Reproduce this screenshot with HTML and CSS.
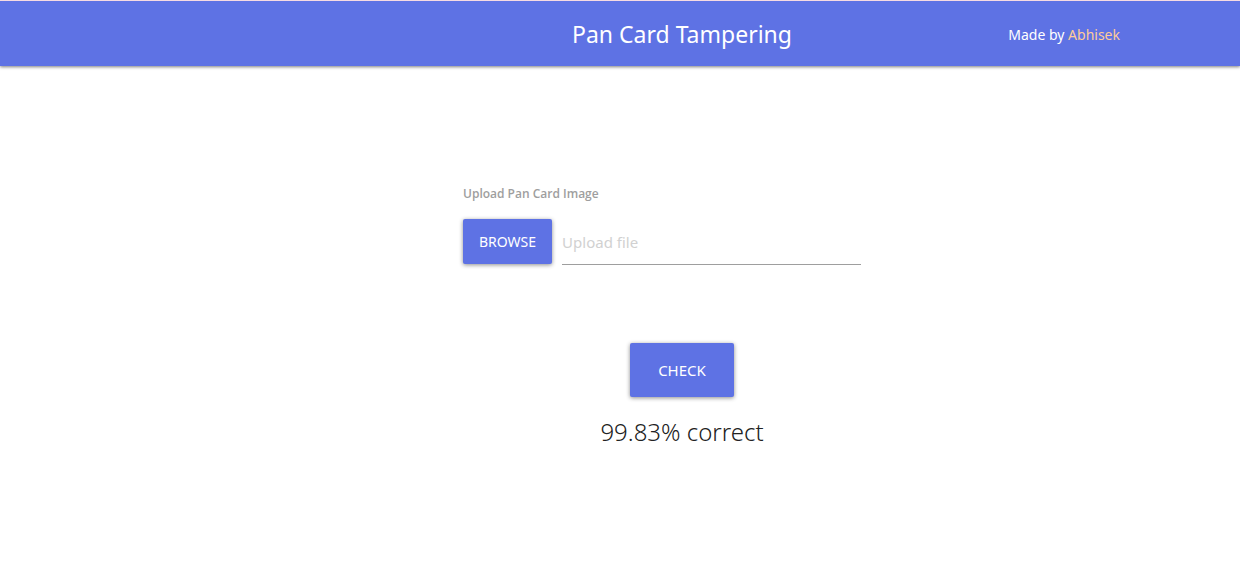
FILE: index.html
```html
<!DOCTYPE html>
<html lang="en">
<head>
<meta charset="utf-8">
<meta name="viewport" content="width=device-width, initial-scale=1">
<title>Pan Card Tampering</title>
<link rel="stylesheet" href="styles.css">
</head>
<body>
<header class="navbar">
  <h1 class="brand">Pan Card Tampering</h1>
  <p class="credit">Made by <a href="#">Abhisek</a></p>
</header>
<main class="content">
  <form class="upload">
    <label class="upload-label" for="file-path">Upload Pan Card Image</label>
    <div class="file-field">
      <button class="btn" type="button">BROWSE</button>
      <input class="file-path" id="file-path" type="text" placeholder="Upload file">
    </div>
    <button class="btn btn-large" type="submit">CHECK</button>
  </form>
  <p class="result">99.83% correct</p>
</main>
</body>
</html>
```
FILE: styles.css
```css
* {
  box-sizing: border-box;
}

body {
  margin: 0;
  background: #fff;
  color: #212121;
  font-family: "Noto Sans", "Open Sans", sans-serif;
  font-size: 14px;
}

.navbar {
  display: grid;
  grid-template-columns: 1fr auto 1fr;
  align-items: center;
  height: 66px;
  padding-left: 10%;
  border-top: 1px solid #f6dbe2;
  background: #5e72e4;
  color: #fff;
  box-shadow: 0 1px 3px rgba(0, 0, 0, 0.5);
}

.brand {
  grid-column: 2;
  margin: 0;
  font-size: 23px;
  font-weight: 400;
}

.credit {
  justify-self: end;
  margin: 0;
  padding: 2px 120px 0 0;
}

.credit a {
  color: #ffcc99;
  text-decoration: none;
}

.content {
  display: flex;
  flex-direction: column;
  align-items: center;
  padding: 118px 0 48px 10%;
}

.upload {
  display: flex;
  flex-direction: column;
  width: 100%;
  max-width: 438px;
}

.upload-label {
  color: #9e9e9e;
  font-family: "Open Sans", "Noto Sans", sans-serif;
  font-size: 12px;
  font-weight: 600;
  line-height: 20px;
}

.file-field {
  display: flex;
  gap: 10px;
  margin: 15px 40px 78px 0;
}

.btn {
  height: 45px;
  padding: 0 16px;
  border: 0;
  border-radius: 2px;
  background: #5e72e4;
  color: #fff;
  font: inherit;
  font-size: 14px;
  box-shadow: 0 1px 4px rgba(0, 0, 0, 0.45);
  cursor: pointer;
}

.btn-large {
  align-self: center;
  height: 54px;
  padding: 0 28px;
  font-size: 15px;
}

.file-path {
  flex: 1;
  min-width: 0;
  height: 46px;
  padding: 0;
  border: 0;
  border-bottom: 1px solid #9e9e9e;
  background: transparent;
  color: inherit;
  font: inherit;
  font-size: 15px;
  outline: 0;
}

.file-path::placeholder {
  color: #d1d1d1;
  opacity: 1;
}

.result {
  margin: 18px 0 0;
  font-size: 24px;
  font-weight: 300;
  line-height: 34px;
}
```
